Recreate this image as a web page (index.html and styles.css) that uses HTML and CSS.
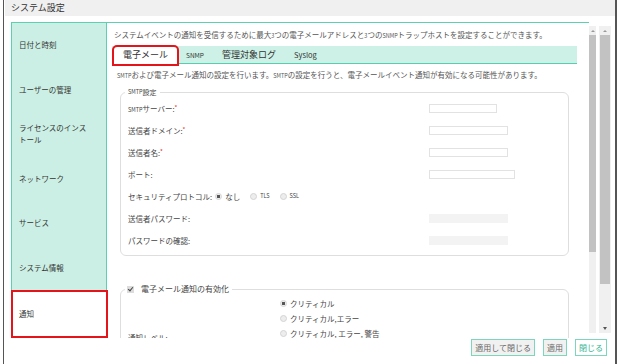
FILE: index.html
```html
<!DOCTYPE html>
<html lang="ja">
    <head>
        <meta charset="UTF-8">
        <meta name="viewport" content="width=device-width, initial-scale=1.0">
        <title>システム設定</title>
        <link rel="stylesheet" href="styles.css">
    </head>
    <body>
        <div class="frame">
            <div class="titlebar">システム設定</div>
            <div class="main">
                <ul class="sidebar">
                    <li>日付と時刻</li>
                    <li>ユーザーの管理</li>
                    <li>ライセンスのインストール</li>
                    <li>ネットワーク</li>
                    <li>サービス</li>
                    <li>システム情報</li>
                    <li class="active">通知</li>
                </ul>
                <div class="pane">
                    <p class="intro">システムイベントの通知を受信するために最大<span class="abbr">3</span>つの電子メールアドレスと<span class="abbr">3</span>つの<span class="abbr">SNMP</span>トラップホストを設定することができます。</p>
                    <div class="tabs">
                        <span class="tab active">電子メール</span>
                        <span class="tab small">SNMP</span>
                        <span class="tab">管理対象ログ</span>
                        <span class="tab latin">Syslog</span>
                    </div>
                    <p class="note"><span class="abbr">SMTP</span>および電子メール通知の設定を行います。<span class="abbr">SMTP</span>の設定を行うと、電子メールイベント通知が有効になる可能性があります。</p>

                    <fieldset class="group">
                        <legend><span class="abbr">SMTP</span>設定</legend>
                        <div class="row"><label><span class="abbr">SMTP</span>サーバー:<em>*</em></label><span class="field" style="width:68px"></span></div>
                        <div class="row"><label>送信者ドメイン:<em>*</em></label><span class="field" style="width:79px"></span></div>
                        <div class="row"><label>送信者名:<em>*</em></label><span class="field" style="width:79px"></span></div>
                        <div class="row"><label>ポート:</label><span class="field" style="width:86px"></span></div>
                        <div class="row">
                            <span class="proto">セキュリティプロトコル:</span>
                            <span class="choice"><i class="radio on"></i>なし</span>
                            <span class="choice"><i class="radio"></i><span class="abbr">TLS</span></span>
                            <span class="choice"><i class="radio"></i><span class="abbr">SSL</span></span>
                        </div>
                        <div class="row"><label>送信者パスワード:</label><span class="field off" style="width:79px"></span></div>
                        <div class="row"><label>パスワードの確認:</label><span class="field off" style="width:79px"></span></div>
                    </fieldset>

                    <fieldset class="group second">
                        <legend><i class="check"></i>電子メール通知の有効化</legend>
                        <div class="levels">
                            <span class="level-label">通知レベル:</span>
                            <div class="options">
                                <span class="choice"><i class="radio on"></i>クリティカル</span>
                                <span class="choice"><i class="radio"></i>クリティカル,エラー</span>
                                <span class="choice"><i class="radio"></i>クリティカル, エラー, 警告</span>
                                <span class="choice"><i class="radio"></i>クリティカル, エラー, 警告, 情報</span>
                                <span class="choice"><i class="radio"></i>すべて</span>
                            </div>
                        </div>
                    </fieldset>
                </div>
                <div class="scroll inner">
                    <i class="arrow up"></i>
                    <div class="thumb" style="height:217px"></div>
                </div>
                <div class="scroll outer">
                    <i class="arrow up"></i>
                    <div class="thumb" style="height:249px"></div>
                    <i class="arrow down"></i>
                </div>
            </div>
            <div class="footer">
                <button type="button">適用して閉じる</button>
                <button type="button">適用</button>
                <button type="button" class="close">閉じる</button>
            </div>
        </div>
    </body>
</html>
```

FILE: styles.css
```css
* { box-sizing: border-box; }
body { margin: 0; background: #fff; font-family: "Noto Sans CJK JP", "Noto Sans", sans-serif; font-size: 7.5px; color: #444; overflow: hidden; }

.frame { margin-left: 3px; width: 614px; height: 364px; border-left: 1px solid #555; border-right: 2px solid #555; display: flex; flex-direction: column; }
.titlebar { height: 16px; margin-left: 1px; padding-left: 6px; background: #f0f0f0; font-size: 9px; line-height: 16px; color: #333; }

.main { display: flex; height: 316px; margin-top: 6px; padding-left: 7px; }

.sidebar { list-style: none; margin: 0; padding: 0; width: 96px; flex: none; display: flex; flex-direction: column; background: #cbefe4; border: 1px solid #5dd0b0; border-bottom: none; }
.sidebar li { height: 44.5px; flex: none; display: flex; align-items: center; padding: 0 14px 0 7px; line-height: 12px; color: #333; }
.sidebar li.active { height: 48px; margin: 0 -2px 0 -1px; padding-left: 6px; background: #fff; border: 2px solid #e5141b; }

.pane { width: 482px; flex: none; overflow: hidden; border-top: 1px solid #5dd0b0; padding: 0 12px 0 5px; }
.intro { margin: 6px 0 0 2px; line-height: 12px; color: #555; white-space: nowrap; }
.note { margin: 5px 0 0 5px; line-height: 12px; color: #555; white-space: nowrap; }
.abbr { font-size: 5.5px; }

.tabs { display: flex; align-items: flex-end; height: 18px; margin-top: 4px; padding-left: 2px; background: #cdf1e6; border-bottom: 1px solid #55cfad; }
.tab { height: 16px; padding: 0 9px; line-height: 16px; font-size: 9px; color: #333; }
.tab.small { font-size: 6.5px; }
.tab.latin { font-size: 7.5px; }
.tab.active { height: 17px; margin-bottom: -1px; background: #fff; border-radius: 3px 3px 0 0; outline: 2px solid #e5141b; }

.group { margin: 5px 8px 0; padding: 0 7px 4px; border: 1px solid #dedede; border-radius: 6px; }
.group legend { margin-left: -3px; padding: 0 3px; line-height: 10px; font-size: 7px; display: flex; align-items: center; }
.group.second { margin-top: 28px; }
.group.second legend { font-size: 8px; padding-left: 2px; }

.row { display: flex; align-items: center; height: 22px; }
.row label { width: 301px; flex: none; }
.row em { font-style: normal; color: #e22; font-size: 6px; vertical-align: top; }
.field { display: block; height: 9px; border: 1px solid #e2e2e2; background: #fff; }
.field.off { background: #f3f3f3; border-color: #f3f3f3; }
.proto { margin-right: 3px; }

.choice { display: flex; align-items: center; height: 15px; margin-right: 10px; }
.radio { width: 7px; height: 7px; margin-right: 3px; border-radius: 50%; border: 1px solid #d4d4d4; background: #ededed; }
.radio.on { background: radial-gradient(circle, #555 0 1.4px, #ededed 2px); }
.check { width: 7px; height: 7px; margin-right: 7px; background: #dcdcdc; position: relative; }
.check::after { content: ""; position: absolute; left: 2px; top: 0; width: 2px; height: 4px; border: solid #444; border-width: 0 1px 1px 0; transform: rotate(40deg); }

.levels { display: flex; align-items: center; padding-top: 2px; }
.level-label { width: 152px; flex: none; padding-top: 8px; }
.options { display: flex; flex-direction: column; }

.scroll { flex: none; display: flex; flex-direction: column; height: 307px; margin-top: 4px; background: #f0f0f0; }
.scroll.inner { width: 7px; }
.scroll.outer { width: 12px; margin-left: 3px; }
.thumb { flex: none; background: #c2c2c2; }
.scroll.outer .thumb { margin: 0 1px; }
.arrow { height: 9px; flex: none; display: flex; justify-content: center; align-items: center; }
.arrow::before { content: ""; border-left: 2px solid transparent; border-right: 2px solid transparent; }
.arrow.up::before { border-bottom: 2px solid #999; }
.arrow.down { margin-top: auto; }
.arrow.down::before { border-top: 3px solid #555; border-left-width: 2.5px; border-right-width: 2.5px; }

.footer { display: flex; justify-content: flex-end; gap: 8px; padding: 1px 8px 0 0; }
.footer button { height: 17px; padding: 0 3px; border: 1.5px solid #7dd6bc; background: #f1f1f1; font-family: "Noto Sans CJK JP", sans-serif; font-size: 8px; line-height: 12px; color: #666; }
.footer button.close { background: #fff; color: #2fb592; }
```
